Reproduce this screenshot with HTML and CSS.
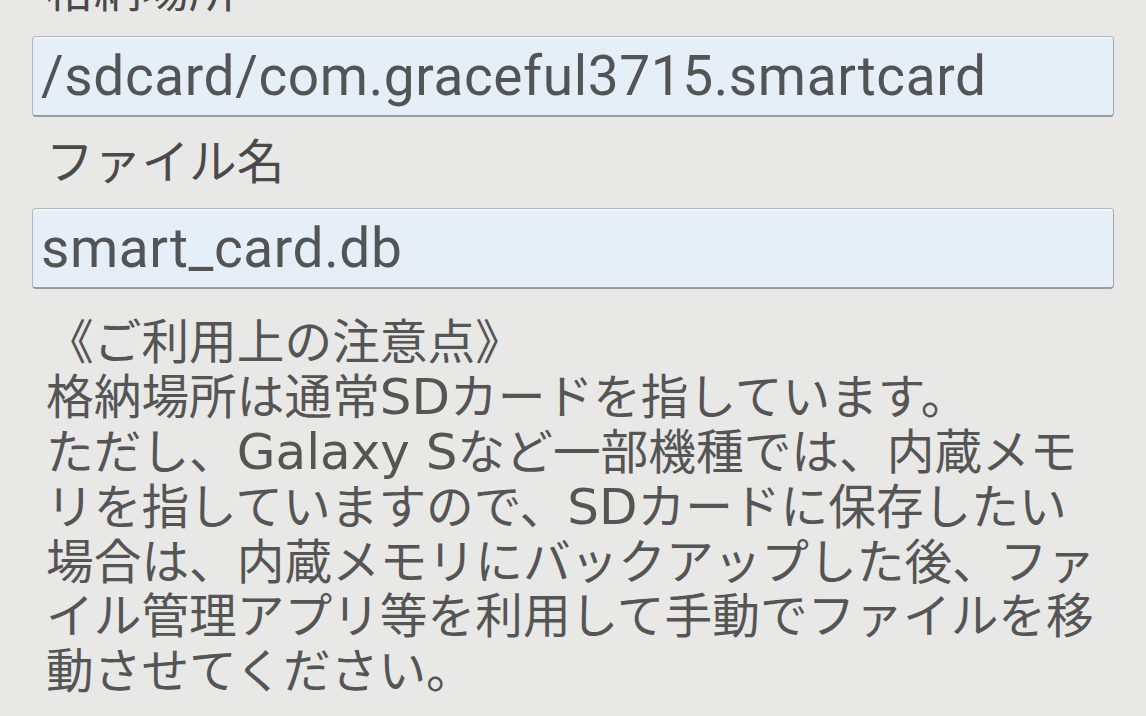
FILE: index.html
```html
<!DOCTYPE html>
<html>

<head>
	<meta http-equiv="content-type" content="text/html; charset=utf-8" />
	<title>バックアップ設定</title>
	<link rel="stylesheet" href="styles.css">
</head>

<body>
	<div class="settings">
		<div class="field first">
			<label class="field-label" for="dir">格納場所</label>
			<input class="field-input" type="text" id="dir" value="/sdcard/com.graceful3715.smartcard" />
		</div>

		<div class="field">
			<label class="field-label" for="filename">ファイル名</label>
			<input class="field-input" type="text" id="filename" value="smart_card.db" />
		</div>

		<div class="notes">
			<p class="notes-title">《ご利用上の注意点》</p>
			<p class="notes-body">
				格納場所は通常<span class="en">SD</span>カードを指しています。<br>
				ただし、<span class="en">Galaxy S</span>など一部機種では、内蔵メモ<br>
				リを指していますので、<span class="en">SD</span>カードに保存したい<br>
				場合は、内蔵メモリにバックアップした後、ファ<br>
				イル管理アプリ等を利用して手動でファイルを移<br>
				動させてください。
			</p>
		</div>
	</div>
</body>

</html>
```

FILE: styles.css
```css
html,
body {
	margin: 0;
	padding: 0;
	background-color: #e8e8e6;
	overflow: hidden;
}

body {
	font-family: "Noto Sans CJK JP", sans-serif;
	color: #4a4a4a;
}

.settings {
	padding: 0 32px;
}

/* label + text box pairs */
.field {
	display: flex;
	flex-direction: column;
	margin-bottom: 15px;
}

.field.first {
	margin-top: -40px;
}

.field-label {
	font-size: 47.7px;
	line-height: 54px;
	padding-left: 14px;
	margin-bottom: 22px;
	color: #4a4a4a;
}

.field-input {
	width: 100%;
	height: 81px;
	box-sizing: border-box;
	padding: 0 8px;
	margin: 0;
	font-family: Roboto, "Liberation Sans", sans-serif;
	font-size: 55px;
	letter-spacing: 0.6px;
	color: #525456;
	background-color: #e6eef7;
	border: 1px solid #b4b8bc;
	border-right-color: #a4a8ac;
	border-bottom: 2px solid #989ca0;
	border-radius: 4px;
	box-shadow: inset 0 2px 0 #f2f6fb;
	outline: none;
}

/* usage notes */
.notes {
	margin-top: 23px;
	padding-left: 14px;
}

.notes p {
	margin: 0;
	font-size: 47.7px;
	line-height: 54.5px;
	color: #555555;
	white-space: nowrap;
}

.notes .en {
	font-family: "DejaVu Sans", sans-serif;
	font-size: 50px;
	line-height: 1;
}
```
